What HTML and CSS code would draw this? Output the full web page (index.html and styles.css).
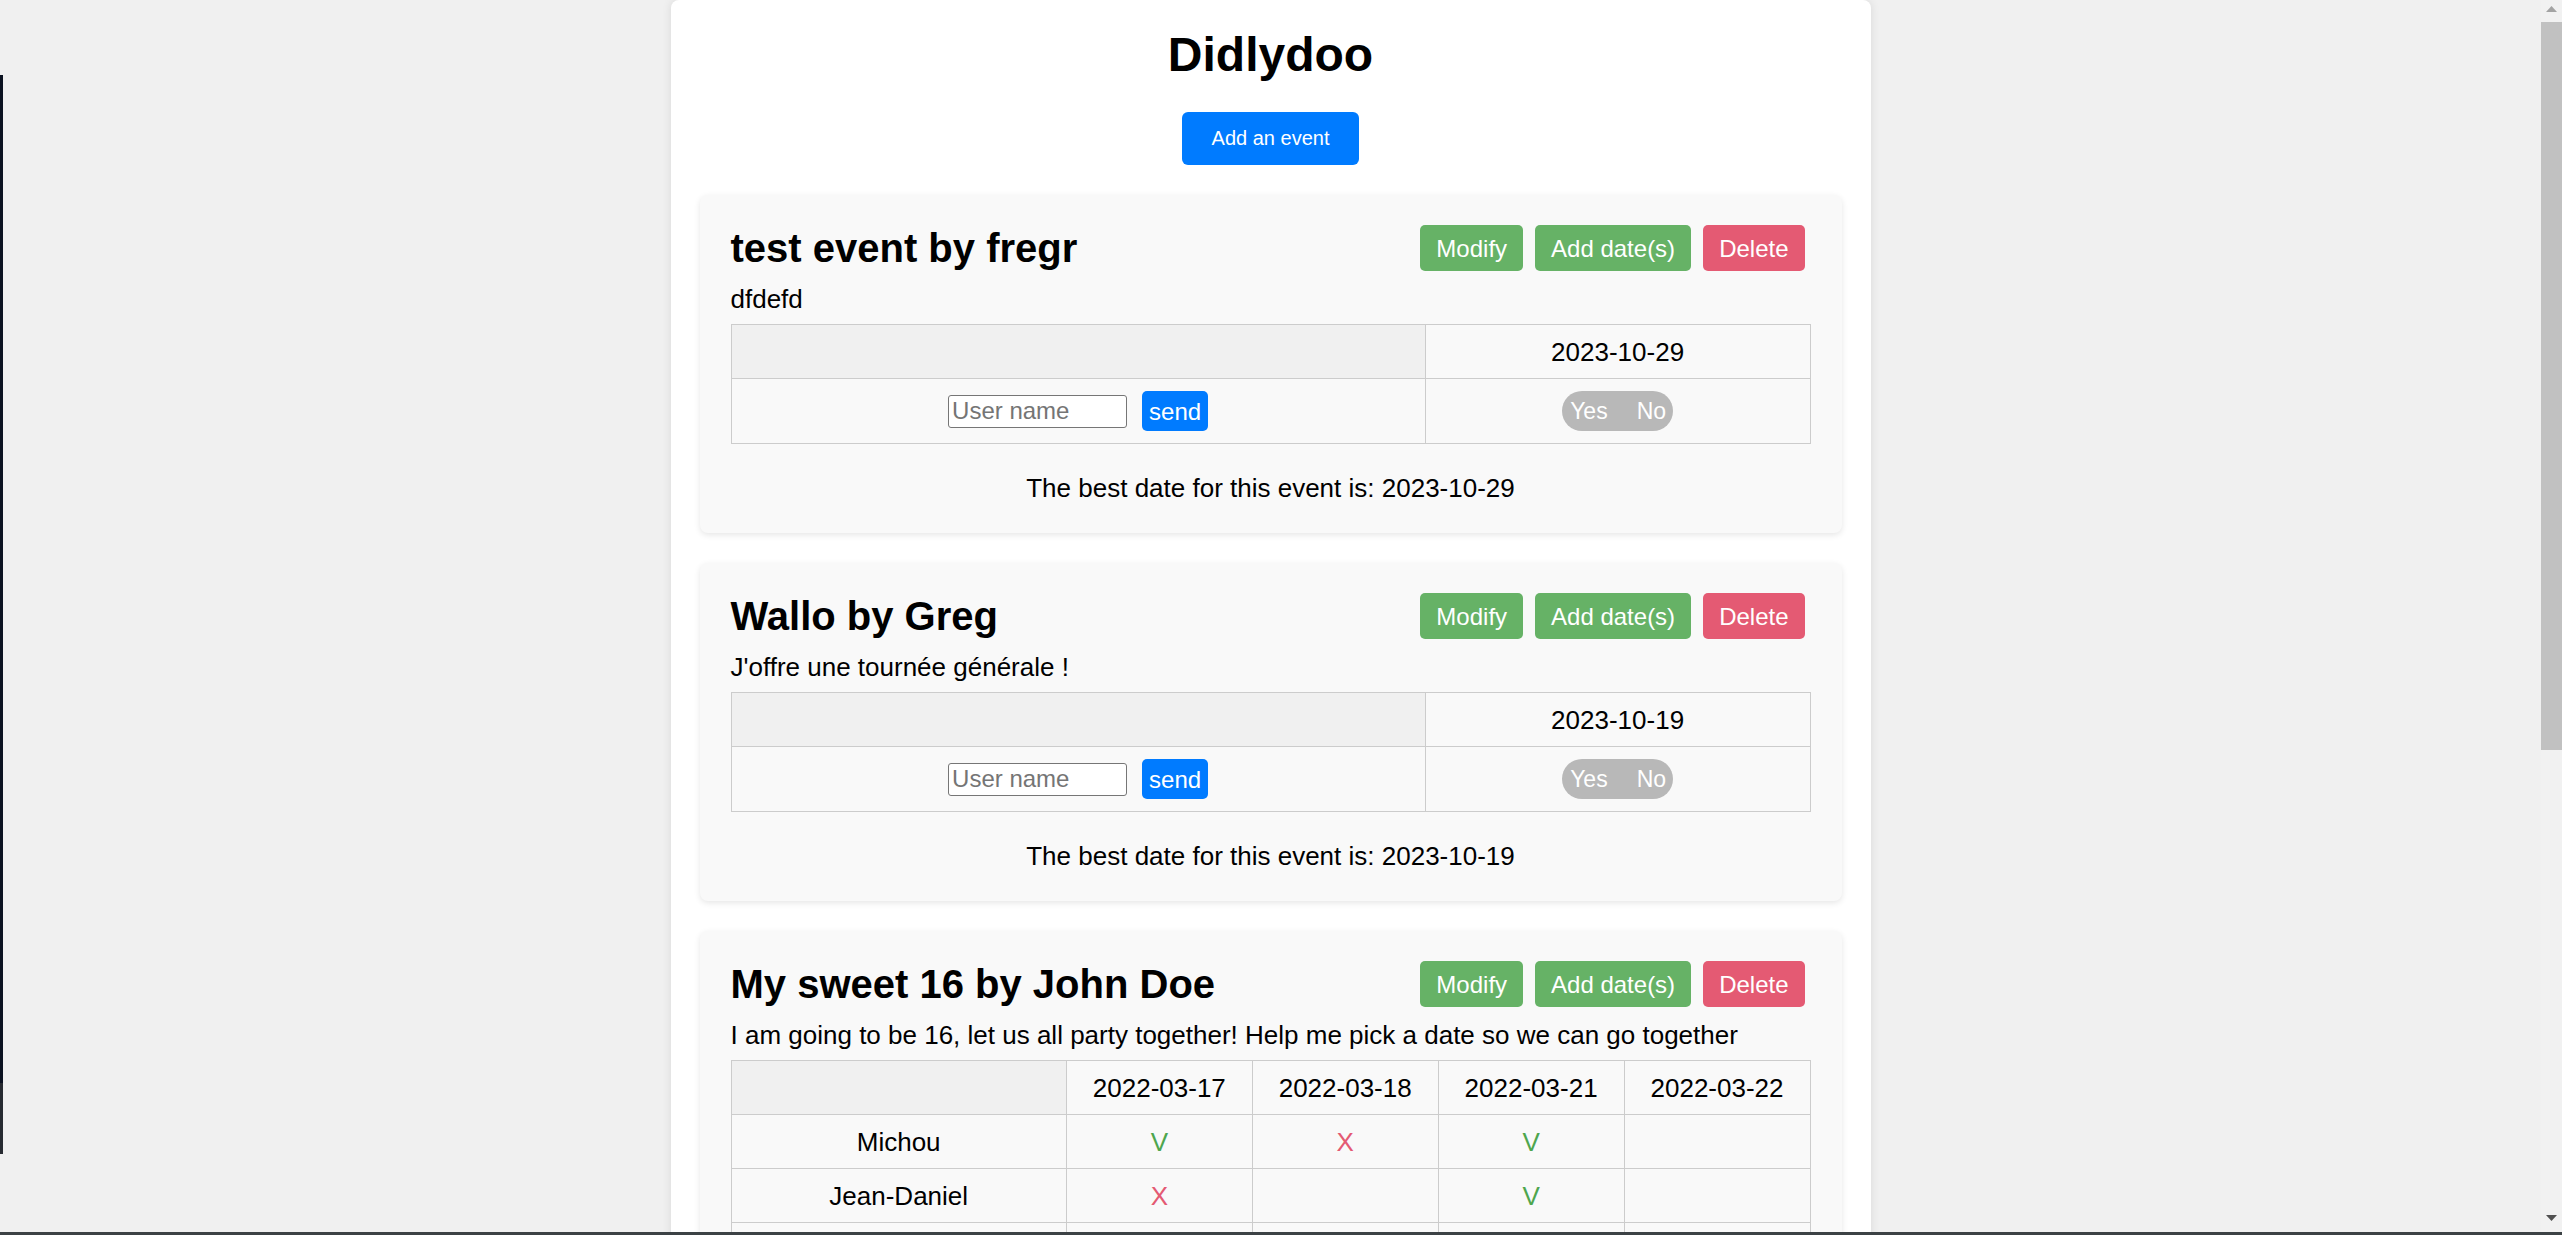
FILE: index.html
```html
<!DOCTYPE html>
<html lang="en">
<head>
<meta charset="utf-8">
<title>Didlydoo</title>
<link rel="stylesheet" href="styles.css">
</head>
<body>
<div class="screen">
  <div class="viewport">
    <main class="container">
      <h1 class="site-title">Didlydoo</h1>
      <button class="btn-primary">Add an event</button>

      <section class="card">
        <div class="card-head">
          <h2 class="card-title">test event by fregr</h2>
          <div class="actions">
            <button class="btn btn-green">Modify</button>
            <button class="btn btn-green">Add date(s)</button>
            <button class="btn btn-red">Delete</button>
          </div>
        </div>
        <p class="desc">dfdefd</p>
        <table class="grid">
          <tr><th class="corner"></th><th>2023-10-29</th></tr>
          <tr>
            <td><div class="entry"><input class="name-input" type="text" placeholder="User name"><button class="btn-send">send</button></div></td>
            <td><div class="entry"><div class="toggle"><span>Yes</span><span>No</span></div></div></td>
          </tr>
        </table>
        <p class="best">The best date for this event is: 2023-10-29</p>
      </section>

      <section class="card">
        <div class="card-head">
          <h2 class="card-title">Wallo by Greg</h2>
          <div class="actions">
            <button class="btn btn-green">Modify</button>
            <button class="btn btn-green">Add date(s)</button>
            <button class="btn btn-red">Delete</button>
          </div>
        </div>
        <p class="desc">J'offre une tournée générale !</p>
        <table class="grid">
          <tr><th class="corner"></th><th>2023-10-19</th></tr>
          <tr>
            <td><div class="entry"><input class="name-input" type="text" placeholder="User name"><button class="btn-send">send</button></div></td>
            <td><div class="entry"><div class="toggle"><span>Yes</span><span>No</span></div></div></td>
          </tr>
        </table>
        <p class="best">The best date for this event is: 2023-10-19</p>
      </section>

      <section class="card">
        <div class="card-head">
          <h2 class="card-title">My sweet 16 by John Doe</h2>
          <div class="actions">
            <button class="btn btn-green">Modify</button>
            <button class="btn btn-green">Add date(s)</button>
            <button class="btn btn-red">Delete</button>
          </div>
        </div>
        <p class="desc">I am going to be 16, let us all party together! Help me pick a date so we can go together</p>
        <table class="grid">
          <tr><th class="corner"></th><th>2022-03-17</th><th>2022-03-18</th><th>2022-03-21</th><th>2022-03-22</th></tr>
          <tr><td>Michou</td><td class="yes">V</td><td class="no">X</td><td class="yes">V</td><td></td></tr>
          <tr><td>Jean-Daniel</td><td class="no">X</td><td></td><td class="yes">V</td><td></td></tr>
          <tr class="entry-row">
            <td><div class="entry"><input class="name-input" type="text" placeholder="User name"><button class="btn-send">send</button></div></td>
            <td><div class="entry"><div class="toggle"><span>Yes</span><span>No</span></div></div></td>
            <td><div class="entry"><div class="toggle"><span>Yes</span><span>No</span></div></div></td>
            <td><div class="entry"><div class="toggle"><span>Yes</span><span>No</span></div></div></td>
            <td><div class="entry"><div class="toggle"><span>Yes</span><span>No</span></div></div></td>
          </tr>
        </table>
        <p class="best">The best date for this event is: 2022-03-21</p>
      </section>
    </main>
  </div>
  <div class="scrollbar">
    <div class="sb-btn sb-up"><svg width="11" height="6" viewBox="0 0 11 6"><path d="M0 6 L5.5 0 L11 6 Z" fill="#a3a3a3"/></svg></div>
    <div class="sb-thumb"></div>
    <div class="sb-rest"></div>
    <div class="sb-btn sb-down"><svg width="11" height="6" viewBox="0 0 11 6"><path d="M0 0 L5.5 6 L11 0 Z" fill="#505050"/></svg></div>
  </div>
</div>
<div class="edge-strip"><div class="edge-navy"></div><div class="edge-gray"></div></div>
<div class="bottom-line"></div>
</body>
</html>
```

FILE: styles.css
```css
html, body {
  margin: 0;
  padding: 0;
  height: 1235px;
  overflow: hidden;
  background: #f0f0f0;
  font-family: "Liberation Sans", Arial, sans-serif;
  color: #000;
}

.screen {
  display: flex;
  height: 1235px;
}

.viewport {
  flex: 1;
  overflow: hidden;
  background: #f0f0f0;
}

.container {
  width: 1200px;
  box-sizing: border-box;
  margin: 0 auto;
  background: #fff;
  border-radius: 8px;
  box-shadow: 0 0 10px rgba(0, 0, 0, 0.1);
  padding: 27px 29px 40px;
  display: flex;
  flex-direction: column;
  gap: 30px;
}

.site-title {
  margin: 0;
  font-size: 48px;
  font-weight: bold;
  text-align: center;
  line-height: 55px;
}

.btn-primary {
  align-self: center;
  background: #007bff;
  color: #fff;
  border: none;
  border-radius: 6px;
  font-family: "Liberation Sans", Arial, sans-serif;
  font-size: 20px;
  line-height: 23px;
  padding: 15px 30px;
}

.card {
  background: #f9f9f9;
  border-radius: 8px;
  box-shadow: 0 2px 6px rgba(0, 0, 0, 0.1);
  padding: 30px 31px;
}

.card-head {
  display: flex;
  justify-content: space-between;
  align-items: center;
  margin-bottom: 13px;
}

.card-title {
  margin: 0;
  font-size: 40px;
  font-weight: bold;
  line-height: 46px;
}

.actions {
  display: flex;
}

.btn {
  margin: 0 6px;
  border: none;
  border-radius: 5px;
  color: #fff;
  font-family: "Liberation Sans", Arial, sans-serif;
  font-size: 24px;
  line-height: 27px;
  padding: 9.5px 16px;
}

.btn-green {
  background: #66b266;
}

.btn-red {
  background: #e45a73;
}

.desc {
  margin: 0 0 10px;
  font-size: 26px;
  line-height: 30px;
}

.grid {
  width: 100%;
  border-collapse: collapse;
  border: 1px solid #ccc;
  font-size: 26px;
}

.grid th,
.grid td {
  border: 1px solid #ccc;
  padding: 11.5px 12px;
  line-height: 30px;
  text-align: center;
  font-weight: normal;
}

.grid .corner {
  background: #f0f0f0;
}

.grid .yes {
  color: #4ea64e;
}

.grid .no {
  color: #e45a73;
}

.entry {
  display: flex;
  justify-content: center;
  align-items: center;
  gap: 15px;
  height: 41px;
}

.name-input {
  box-sizing: border-box;
  width: 179px;
  height: 33px;
  border: 1px solid #767676;
  border-radius: 3px;
  padding: 1px 3px;
  background: #fff;
  font-family: "Liberation Sans", Arial, sans-serif;
  font-size: 24px;
}

.name-input::placeholder {
  color: #757575;
}

.btn-send {
  background: #007bff;
  color: #fff;
  border: none;
  border-radius: 5px;
  font-family: "Liberation Sans", Arial, sans-serif;
  font-size: 24px;
  line-height: 27px;
  padding: 6.5px 7px;
}

.toggle {
  display: flex;
  align-items: center;
  gap: 29px;
  height: 40px;
  padding: 0 7px 0 8px;
  border-radius: 20px;
  background: #b8b8b8;
  color: #fff;
  font-size: 23px;
}

.best {
  margin: 29px 0 0;
  font-size: 26px;
  line-height: 30px;
  text-align: center;
}

.scrollbar {
  width: 21px;
  display: flex;
  flex-direction: column;
  background: #f1f1f1;
}

.sb-btn {
  height: 17px;
  display: flex;
  justify-content: center;
  align-items: center;
}

.sb-down {
  height: 10px;
  padding-bottom: 12px;
}

.sb-thumb {
  margin-top: 5px;
  height: 728px;
  background: #c1c1c1;
}

.sb-rest {
  flex: 1;
}

.edge-strip {
  position: absolute;
  left: 0;
  top: 75px;
  width: 3px;
  display: flex;
  flex-direction: column;
}

.edge-navy {
  height: 1008px;
  background: #0b1221;
}

.edge-gray {
  height: 71px;
  background: #272b31;
}

.bottom-line {
  position: absolute;
  left: 0;
  right: 0;
  top: 1232px;
  height: 3px;
  background: #3c4245;
}
```
